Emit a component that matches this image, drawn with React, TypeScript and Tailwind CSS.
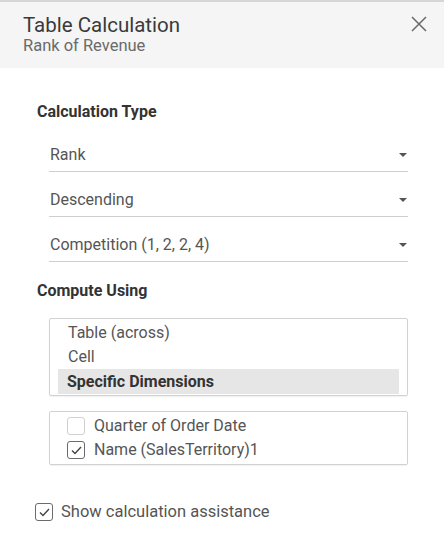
import React from 'react';

const Caret = () => (
  <svg width="8" height="4" viewBox="0 0 8 4" className="shrink-0">
    <path d="M0 0 H8 L4 4 Z" fill="#555" />
  </svg>
);

const Check = () => (
  <svg width="11" height="9" viewBox="0 0 11 9">
    <path d="M1 4.5 L4 7.5 L10 1" fill="none" stroke="#444" strokeWidth="1.4" />
  </svg>
);

const Box: React.FC<{ checked?: boolean }> = ({ checked }) => (
  <span
    className={`w-[18px] h-[18px] rounded-[3px] border flex items-center justify-center shrink-0 bg-white ${
      checked ? 'border-[#6b6b6b]' : 'border-[#d0d0d0]'
    }`}
  >
    {checked && <Check />}
  </span>
);

const Dropdown: React.FC<{ label: string }> = ({ label }) => (
  <div className="w-full h-[45px] border-b border-[#cfcfcf] flex items-center justify-between pl-px pr-[1px] pt-[11px]">
    <span className="text-[16px] text-[#555]">{label}</span>
    <Caret />
  </div>
);

export default function App() {
  const dims = [
    { label: 'Quarter of Order Date', checked: false },
    { label: 'Name (SalesTerritory)1', checked: true },
  ];

  return (
    <div
      className="w-[444px] h-[560px] bg-white overflow-hidden"
      style={{ fontFamily: 'Roboto, "Noto Sans", sans-serif' }}
    >
      {/* Header */}
      <div className="h-[68px] bg-[#f5f5f5] border-t-2 border-[#d6d6d6] flex justify-between pl-[23px] pr-[16px]">
        <div className="pt-[10px]">
          <div className="text-[20.5px] leading-[26px] text-[#3a3a3a]">Table Calculation</div>
          <div className="text-[16.5px] leading-[20px] text-[#6a6a6a] -mt-[2px]">Rank of Revenue</div>
        </div>
        <button className="mt-[13px] w-[18px] h-[18px] flex items-center justify-center">
          <svg width="16" height="16" viewBox="0 0 16 16">
            <path d="M1 1 L15 15 M15 1 L1 15" stroke="#6a6a6a" strokeWidth="1.5" />
          </svg>
        </button>
      </div>

      <div className="pl-[37px] pr-[36px]">
        <div className="mt-[33px] text-[16px] font-bold text-[#333] leading-[22px]">Calculation Type</div>

        <div className="pl-[12px] mt-[4px]">
          <Dropdown label="Rank" />
          <Dropdown label="Descending" />
          <Dropdown label="Competition (1, 2, 2, 4)" />
        </div>

        <div className="mt-[18px] text-[16px] font-bold text-[#333] leading-[22px]">Compute Using</div>

        <div className="ml-[12px] mt-[16px]">
          <div className="border border-[#d2d2d2] rounded-[2px] shadow-[0_1px_1px_rgba(0,0,0,0.06)] pt-[2px] pb-px px-[8px]">
            <div className="h-[24px] flex items-center pl-[10px] text-[16px] text-[#555]">Table (across)</div>
            <div className="h-[24px] flex items-center pl-[10px] text-[16px] text-[#555]">Cell</div>
            <div className="h-[25px] flex items-center pl-[9px] text-[16px] font-bold text-[#333] bg-[#e6e6e6]">
              Specific Dimensions
            </div>
          </div>

          <div className="mt-[15px] border border-[#d2d2d2] rounded-[2px] shadow-[0_1px_1px_rgba(0,0,0,0.06)] py-[2px] pl-[17px]">
            {dims.map((d) => (
              <div key={d.label} className="h-[24px] flex items-center gap-[9px]">
                <Box checked={d.checked} />
                <span className="text-[16px] text-[#555]">{d.label}</span>
              </div>
            ))}
          </div>
        </div>

        <div className="mt-[35px] flex items-center gap-[8px] -ml-[2px]">
          <Box checked />
          <span className="text-[16.5px] text-[#555]">Show calculation assistance</span>
        </div>
      </div>
    </div>
  );
}
